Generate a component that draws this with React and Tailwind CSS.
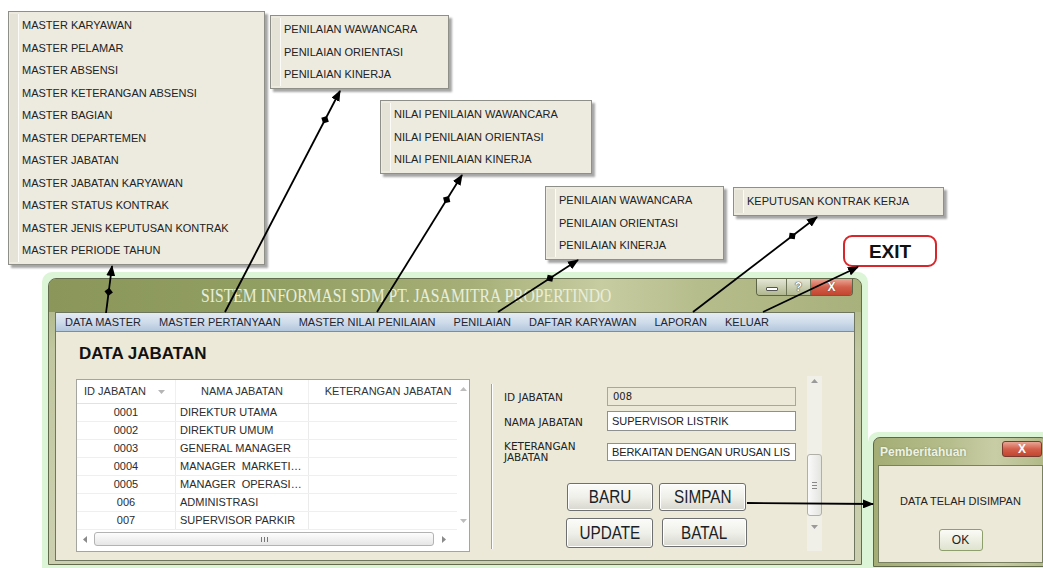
import React from "react";

const masterItems = [
  "MASTER KARYAWAN",
  "MASTER PELAMAR",
  "MASTER ABSENSI",
  "MASTER KETERANGAN ABSENSI",
  "MASTER BAGIAN",
  "MASTER DEPARTEMEN",
  "MASTER JABATAN",
  "MASTER JABATAN KARYAWAN",
  "MASTER STATUS KONTRAK",
  "MASTER JENIS KEPUTUSAN KONTRAK",
  "MASTER PERIODE TAHUN",
];

const menus = [
  { pos: "left-[8px] top-[11px] w-[257px]", items: masterItems },
  {
    pos: "left-[270px] top-[15px] w-[179px]",
    items: ["PENILAIAN WAWANCARA", "PENILAIAN ORIENTASI", "PENILAIAN KINERJA"],
  },
  {
    pos: "left-[380px] top-[100px] w-[212px]",
    items: ["NILAI PENILAIAN WAWANCARA", "NILAI PENILAIAN ORIENTASI", "NILAI PENILAIAN KINERJA"],
  },
  {
    pos: "left-[545px] top-[186px] w-[179px]",
    items: ["PENILAIAN WAWANCARA", "PENILAIAN ORIENTASI", "PENILAIAN KINERJA"],
  },
  { pos: "left-[733px] top-[187px] w-[211px]", items: ["KEPUTUSAN KONTRAK KERJA"] },
];

const menuBar = [
  "DATA MASTER",
  "MASTER PERTANYAAN",
  "MASTER NILAI PENILAIAN",
  "PENILAIAN",
  "DAFTAR KARYAWAN",
  "LAPORAN",
  "KELUAR",
];

// names shown the way the grid cuts them
const rows = [
  ["0001", "DIREKTUR UTAMA"],
  ["0002", "DIREKTUR UMUM"],
  ["0003", "GENERAL MANAGER"],
  ["0004", "MANAGER  MARKETI…"],
  ["0005", "MANAGER  OPERASI…"],
  ["006", "ADMINISTRASI"],
  ["007", "SUPERVISOR PARKIR"],
];

// connector lines of the diagram (knot = where the small diamond sits)
const arrows = [
  { x1: 106, y1: 313, x2: 112, y2: 266, knot: 0.45 },
  { x1: 225, y1: 312, x2: 340, y2: 91, knot: 0.87 },
  { x1: 377, y1: 312, x2: 462, y2: 175, knot: 0.82 },
  { x1: 498, y1: 312, x2: 578, y2: 260, knot: 0.65 },
  { x1: 693, y1: 312, x2: 817, y2: 217, knot: 0.8 },
  { x1: 763, y1: 312, x2: 858, y2: 267 },
  { x1: 747, y1: 503, x2: 873, y2: 504 },
];

function Tri({ dir = "up", className = "" }) {
  const vertical = dir === "up" || dir === "down";
  const w = vertical ? 7 : 4;
  const h = vertical ? 4 : 7;
  const d = {
    up: "M0,4 L3.5,0 L7,4Z",
    down: "M0,0 L7,0 L3.5,4Z",
    left: "M4,0 L4,7 L0,3.5Z",
    right: "M0,0 L4,3.5 L0,7Z",
  }[dir];
  return (
    <svg width={w} height={h} viewBox={`0 0 ${w} ${h}`} className={className}>
      <path d={d} fill="currentColor" />
    </svg>
  );
}

function DropMenu({ pos, items }) {
  return (
    <div
      className={`absolute ${pos} flex border border-[#8f8f8a] bg-[#edebe0] py-[2px] shadow-[3px_3px_2px_rgba(0,0,0,0.35)]`}
    >
      <div className="ml-[1px] w-[9px] border-r border-[#fbfbf7] bg-[#e5e3d7]" />
      <div className="flex-1 pl-[3px]">
        {items.map((it) => (
          <div key={it} className="h-[22.5px] whitespace-nowrap text-[11px] leading-[22.5px] text-[#222]">
            {it}
          </div>
        ))}
      </div>
    </div>
  );
}

function Arrows() {
  return (
    <svg className="pointer-events-none absolute left-0 top-0" width="1043" height="568">
      <defs>
        <marker
          id="head"
          markerUnits="userSpaceOnUse"
          markerWidth="11"
          markerHeight="9"
          refX="10"
          refY="4.5"
          orient="auto"
        >
          <path d="M0,0 L11,4.5 L0,9 Z" fill="#000" />
        </marker>
      </defs>
      {arrows.map((a, i) => {
        const angle = (Math.atan2(a.y2 - a.y1, a.x2 - a.x1) * 180) / Math.PI;
        return (
          <g key={i}>
            <line x1={a.x1} y1={a.y1} x2={a.x2} y2={a.y2} stroke="#000" strokeWidth="1.8" markerEnd="url(#head)" />
            {a.knot && (
              <rect
                x="-3"
                y="-3"
                width="6"
                height="6"
                fill="#000"
                transform={`translate(${a.x1 + (a.x2 - a.x1) * a.knot},${a.y1 + (a.y2 - a.y1) * a.knot}) rotate(${angle + 45})`}
              />
            )}
          </g>
        );
      })}
    </svg>
  );
}

function TitleButtons() {
  return (
    <div className="ml-auto mr-[8px] flex h-[17px] overflow-hidden rounded-b-[4px] border border-t-0 border-[#5c6447]">
      <div className="flex w-[30px] items-center justify-center border-r border-[#6c7458] bg-gradient-to-b from-[#e4e7d6] to-[#b0b78e]">
        <div className="mt-[3px] h-[4px] w-[12px] rounded-[1px] border border-[#555] bg-white" />
      </div>
      <div className="flex w-[24px] items-center justify-center border-r border-[#6c7458] bg-gradient-to-b from-[#e4e7d6] to-[#b0b78e] text-[12px] font-bold leading-none text-white [text-shadow:0_0_1px_#333,0_0_1px_#333]">
        ?
      </div>
      <div className="flex w-[41px] items-center justify-center bg-gradient-to-b from-[#e9a596] via-[#d2604b] to-[#c34530] text-[12px] font-bold leading-none text-white [text-shadow:0_0_1px_#5a1a10]">
        X
      </div>
    </div>
  );
}

function JabatanGrid() {
  return (
    <div className="flex h-[173px] w-[394px] flex-col border border-[#a5a5a0] bg-white">
      <div className="flex flex-1">
        <div className="flex flex-1 flex-col">
          <div className="flex h-[24px] items-center border-b border-[#e2e2e2] text-[11px] text-[#333]">
            <div className="flex h-full w-[99px] items-center border-r border-[#f0f0f0] pl-[7px]">
              ID JABATAN
              <Tri dir="down" className="ml-[12px] text-[#b5b5b5]" />
            </div>
            <div className="flex h-full w-[133px] items-center justify-center border-r border-[#f0f0f0]">
              NAMA JABATAN
            </div>
            <div className="flex h-full flex-1 items-center justify-center pl-[10px] whitespace-nowrap">
              KETERANGAN JABATAN
            </div>
          </div>
          {rows.map(([id, nama]) => (
            <div key={id} className="flex h-[18px] border-b border-[#efefef] text-[11px] leading-[17px] text-[#2b2b2b]">
              <div className="w-[99px] border-r border-[#ebebeb] text-center">{id}</div>
              <div className="w-[133px] whitespace-pre border-r border-[#ebebeb] px-[4px]">{nama}</div>
              <div className="flex-1" />
            </div>
          ))}
        </div>
        <div className="flex w-[12px] flex-col items-center justify-between py-[7px] text-[#bdbdbd]">
          <Tri dir="up" />
          <Tri dir="down" />
        </div>
      </div>
      <div className="flex h-[21px] items-start pt-[2px]">
        <div className="flex h-[14px] w-[380px] items-center pl-[6px] text-[#8a8a8a]">
          <Tri dir="left" />
          <div className="ml-[7px] flex h-[14px] w-[340px] items-center justify-center gap-[2px] rounded-[3px] border border-[#b3b3b3] bg-gradient-to-b from-[#fdfdfd] to-[#e6e6e6]">
            <div className="h-[5px] w-px bg-[#777]" />
            <div className="h-[5px] w-px bg-[#777]" />
            <div className="h-[5px] w-px bg-[#777]" />
          </div>
          <Tri dir="right" className="ml-[8px]" />
        </div>
      </div>
    </div>
  );
}

function FormButton({ label, className }) {
  return (
    <div
      className={`flex items-center justify-center rounded-[3px] border border-[#6d6f70] bg-gradient-to-b from-[#fbfbf9] via-[#f0f0ea] to-[#d7d7cf] shadow-[inset_0_0_0_1px_#ffffff] ${className}`}
    >
      <span className="inline-block scale-x-[0.85] text-[18px] leading-none text-[#1b1f26]">{label}</span>
    </div>
  );
}

function FormPanel() {
  return (
    <div className="flex">
      <div className="ml-[21px] mt-[5px] h-[165px] w-[2px] border-l border-r border-l-[#a5a396] border-r-white" />
      <div className="pl-[11px] pt-[8px]">
        <div className="flex items-center">
          <div className="w-[103px] pt-[3px] font-['DejaVu_Sans',sans-serif] text-[10.5px] text-[#222]">ID JABATAN</div>
          <div className="flex h-[19px] w-[189px] items-center border border-[#a8a79a] bg-[#ece9d8] pl-[5px] font-['DejaVu_Sans',sans-serif] text-[10px] text-[#222]">
            008
          </div>
        </div>
        <div className="mt-[5px] flex items-center">
          <div className="w-[103px] pt-[3px] font-['DejaVu_Sans',sans-serif] text-[10.5px] text-[#222]">NAMA JABATAN</div>
          <div className="flex h-[20px] w-[189px] items-center border border-[#8e8f8f] bg-white pl-[4px] text-[11px] text-[#222]">
            SUPERVISOR LISTRIK
          </div>
        </div>
        <div className="mt-[10px] flex items-center">
          <div className="w-[103px] font-['DejaVu_Sans',sans-serif] text-[10.5px] leading-[11px] text-[#222]">
            KETERANGAN
            <br />
            JABATAN
          </div>
          <div className="flex h-[18px] w-[189px] items-center whitespace-nowrap border border-[#8e8f8f] bg-white pl-[4px] text-[11px] tracking-[-0.1px] text-[#222]">
            BERKAITAN DENGAN URUSAN LIS
          </div>
        </div>
        <div className="ml-[63px] mt-[20px] flex gap-[6px]">
          <FormButton label="BARU" className="h-[28px] w-[86px]" />
          <FormButton label="SIMPAN" className="h-[28px] w-[87px]" />
        </div>
        <div className="ml-[62px] mt-[7px] flex gap-[9px]">
          <FormButton label="UPDATE" className="h-[30px] w-[87px]" />
          <FormButton label="BATAL" className="h-[29px] w-[85px]" />
        </div>
      </div>
      <div className="-mt-[3px] ml-[11px] flex h-[175px] w-[15px] flex-col items-center bg-[#f1f0e8] pt-[3px] text-[#9a9a9a]">
        <Tri dir="up" />
        <div className="mt-[71px] flex h-[62px] w-[15px] flex-col items-center justify-center gap-[2px] rounded-[3px] border border-[#b0b0a8] bg-gradient-to-r from-[#fafafa] to-[#e4e4e0]">
          <div className="h-px w-[5px] bg-[#888]" />
          <div className="h-px w-[5px] bg-[#888]" />
          <div className="h-px w-[5px] bg-[#888]" />
        </div>
        <Tri dir="down" className="mt-[9px]" />
      </div>
    </div>
  );
}

function MainWindow() {
  return (
    <div className="absolute left-[42px] top-[272px] h-[299px] w-[826px] rounded-t-[10px] bg-[#dcf5d6] p-[6px]">
      <div className="flex h-full flex-col rounded-t-[8px] border border-[#636b4d] bg-[linear-gradient(180deg,#a7b07e_0%,#c1c7a0_25%,#ccd0b0_100%)]">
        <div className="flex h-[33px] items-start rounded-t-[7px] bg-[linear-gradient(90deg,#8a965a_0%,#93a064_30%,#a6af77_52%,#c7cca1_68%,#b6bd8c_80%,#a8b07c_100%)]">
          <span className="ml-[152px] mt-[7px] inline-block origin-left scale-x-[0.87] whitespace-nowrap font-['Liberation_Serif',serif] text-[18px] leading-[20px] text-[#e8eedb]">
            SISTEM INFORMASI SDM PT. JASAMITRA PROPERTINDO
          </span>
          <TitleButtons />
        </div>
        <div className="mx-[6px] mb-[3px] flex flex-1 flex-col border border-[#6e7660]">
          <div className="flex h-[19px] items-center border-b border-[#7f8c99] bg-[linear-gradient(180deg,#e4ecf5_0%,#d0dcea_50%,#b2c7dd_100%)]">
            {menuBar.map((m) => (
              <span key={m} className="whitespace-nowrap px-[9px] text-[11px] text-[#1f2530]">
                {m}
              </span>
            ))}
          </div>
          <div className="flex-1 bg-[#ece9d8] pl-[20px] pt-[12px]">
            <h1 className="pl-[3px] text-[17px] font-bold leading-[20px] text-[#111]">DATA JABATAN</h1>
            <div className="mt-[15px] flex">
              <JabatanGrid />
              <FormPanel />
            </div>
          </div>
        </div>
      </div>
    </div>
  );
}

function Dialog() {
  return (
    <div className="absolute left-[868px] top-[432px] h-[140px] w-[185px] rounded-t-[10px] bg-[#dcf5d6] p-[5px]">
      <div className="flex h-full flex-col rounded-t-[7px] border border-[#5f6649] bg-[linear-gradient(90deg,#a3ad74_0%,#b7be8e_45%,#c9cda6_70%,#b0b886_100%)]">
        <div className="flex h-[27px] items-start">
          <span className="ml-[6px] mt-[7px] text-[12px] font-bold leading-[14px] text-[#eef2e2] [text-shadow:0_0_2px_#7d8660]">
            Pemberitahuan
          </span>
          <div className="ml-auto mr-[5px] mt-[3px] flex h-[16px] w-[40px] items-center justify-center rounded-[3px] border border-[#7a3b2e] bg-gradient-to-b from-[#e9a596] via-[#d2604b] to-[#c34530] text-[12px] font-bold leading-none text-white">
            X
          </div>
        </div>
        <div className="mx-[4px] mb-[3px] flex flex-1 flex-col items-center border border-[#7a8160] bg-[#ece9d8]">
          <div className="mt-[29px] whitespace-nowrap text-[11px] leading-[13px] text-[#222]">DATA TELAH DISIMPAN</div>
          <div className="mt-[21px] flex h-[22px] w-[44px] items-center justify-center rounded-[3px] border border-[#8e9f6c] bg-gradient-to-b from-[#fbfbf6] to-[#dfe3cf] text-[12px] text-[#222]">
            OK
          </div>
        </div>
      </div>
    </div>
  );
}

export default function App() {
  return (
    <div className="relative h-[568px] w-[1043px] overflow-hidden bg-white font-['Liberation_Sans',Arial,sans-serif]">
      {menus.map((m, i) => (
        <DropMenu key={i} pos={m.pos} items={m.items} />
      ))}

      <div className="absolute left-[843px] top-[235px] flex h-[32px] w-[94px] items-center justify-center rounded-[9px] border-[2.5px] border-[#d8262a] bg-white">
        <span className="text-[19px] font-bold leading-none text-[#111]">EXIT</span>
      </div>

      <MainWindow />
      <Dialog />
      <Arrows />
    </div>
  );
}
